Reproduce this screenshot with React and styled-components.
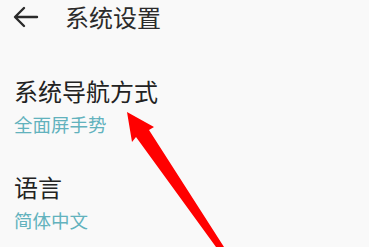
import styled, { createGlobalStyle } from "styled-components";

const GlobalStyle = createGlobalStyle`
  html, body {
    margin: 0;
    padding: 0;
    background: #f9f9f9;
  }
  body {
    font-family: "Noto Sans CJK SC", "Noto Sans", sans-serif;
    overflow: hidden;
  }
`;

const PageStyled = styled.div`
  position: relative;
  width: 369px;
  height: 247px;
  overflow: hidden;
  background: #f9f9f9;
`;

const HeaderStyled = styled.div`
  display: flex;
  align-items: center;
  height: 34px;
  padding-left: 13px;
`;

const BackStyled = styled.svg`
  width: 26px;
  height: 22px;
  margin-right: 26px;
`;

const HeaderTitleStyled = styled.div`
  font-size: 24px;
  line-height: 24px;
  color: #2b2b2b;
`;

const ListStyled = styled.div`
  display: flex;
  flex-direction: column;
  gap: 42px;
  padding: 45px 14px 0;
`;

const ItemStyled = styled.div`
  display: flex;
  flex-direction: column;
  gap: 12px;
`;

const ItemTitleStyled = styled.div`
  font-size: 24px;
  line-height: 24px;
  color: #222;
`;

const ItemValueStyled = styled.div`
  font-size: 18.5px;
  line-height: 18px;
  color: #62b2bd;
`;

const ArrowStyled = styled.svg`
  position: absolute;
  left: 0;
  top: 0;
  width: 369px;
  height: 247px;
  pointer-events: none;
`;

const items = [
  { title: "系统导航方式", value: "全面屏手势" },
  { title: "语言", value: "简体中文" },
];

const App = () => {
  return (
    <PageStyled>
      <GlobalStyle />
      <HeaderStyled>
        <BackStyled viewBox="0 0 26 22">
          <path
            d="M24 11H3M11 2L2 11l9 9"
            fill="none"
            stroke="#2b2b2b"
            strokeWidth="2.4"
            strokeLinecap="round"
            strokeLinejoin="round"
          />
        </BackStyled>
        <HeaderTitleStyled>系统设置</HeaderTitleStyled>
      </HeaderStyled>
      <ListStyled>
        {items.map((item) => (
          <ItemStyled key={item.title}>
            <ItemTitleStyled>{item.title}</ItemTitleStyled>
            <ItemValueStyled>{item.value}</ItemValueStyled>
          </ItemStyled>
        ))}
      </ListStyled>
      <ArrowStyled viewBox="0 0 369 247">
        <polygon
          points="127,112 154,127 149,130 224,247 216,247 136,137 132,142"
          fill="#ff0000"
        />
      </ArrowStyled>
    </PageStyled>
  );
};
export default App;
